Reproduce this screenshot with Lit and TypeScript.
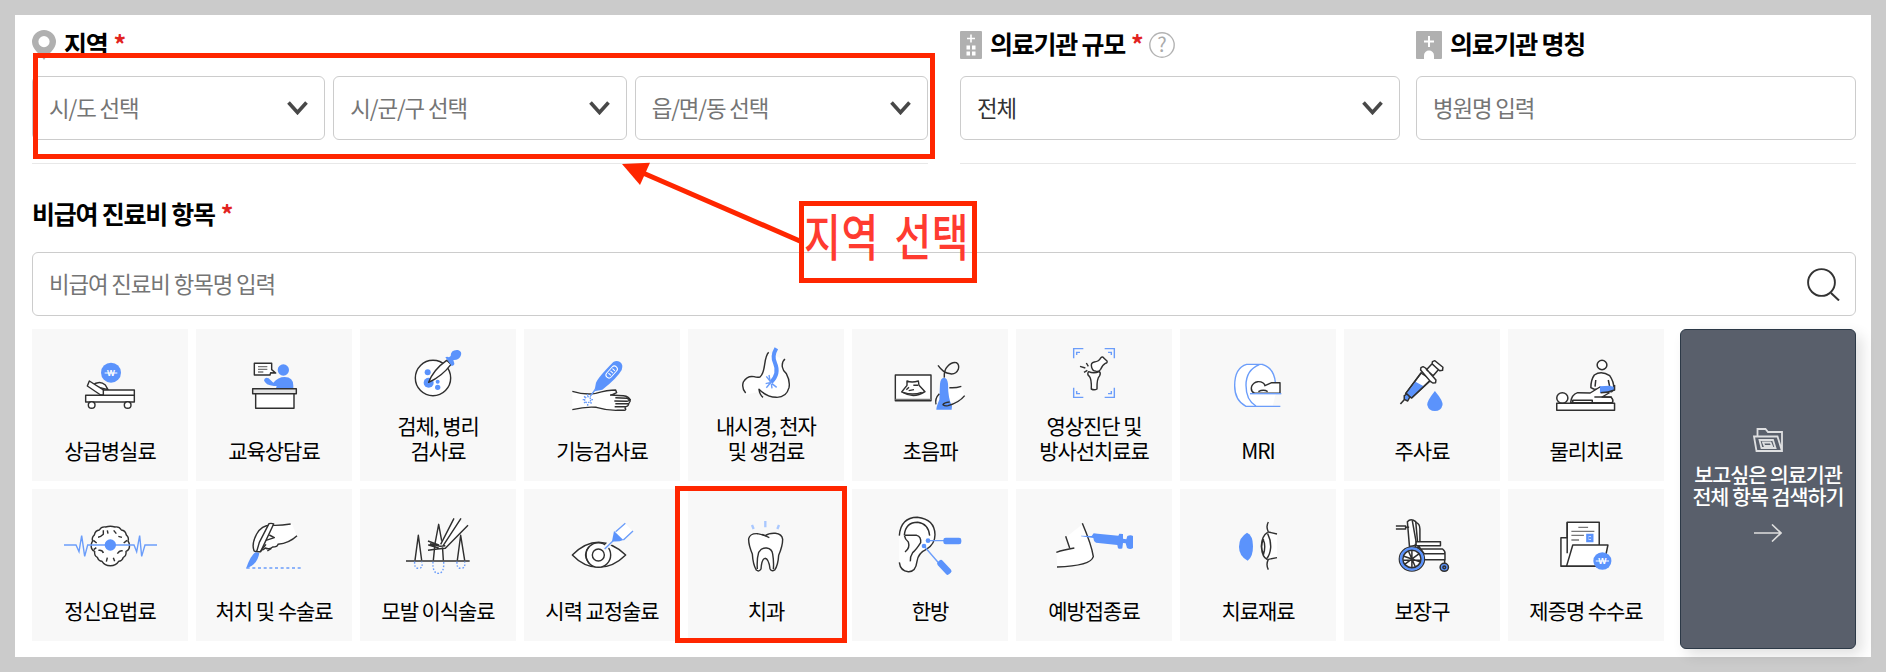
import { LitElement, html, svg, css, SVGTemplateResult } from "lit";
import { customElement, property } from "lit/decorators.js";

interface Category {
  lines: string[];
  box: string;
  art: SVGTemplateResult;
}

const won = (x: number, y: number) => svg`<text class="won" x=${x} y=${y + 9} font-size="25">W</text>
  <path d="M${x - 19} ${y}H${x + 19}" stroke="#fff" stroke-width="3"/>`;

const categories: Category[] = [
  {
    lines: ["상급병실료"],
    box: "36 12 468 240",
    art: svg`<circle class="b" cx="273" cy="143" r="30"/>${won(273, 144)}
      <path class="s" d="M216 182q22-18 40-2l8 14z"/>
      <path class="s" d="M208 168l54 34v8h-20l-40-27z"/>
      <path class="s" d="M250 210V195H343V212M197 211H343V231H197z"/>
      <circle class="s" cx="215" cy="240" r="10"/><circle class="s" cx="323" cy="240" r="10"/>`,
  },
  {
    lines: ["교육상담료"],
    box: "528 12 468 240",
    art: svg`<circle class="b" cx="790" cy="135" r="17"/>
      <path class="b" d="M732 166q2-11 14-6l14 13q14-17 34-17 26 0 26 26v8h-52l2-7h-8q-26-2-30-17z"/>
      <path class="s" d="M703 115H755V134L767 144 752 143 750 150H703z"/>
      <path class="l" d="M714 125H742M714 133H742M714 141H730"/>
      <path class="s" d="M707 204H822V250H707z"/><path class="s" style="fill:#e4e4e4" d="M698 191H829V206H698z"/>`,
  },
  {
    lines: ["검체, 병리", "검사료"],
    box: "30 12 468 240",
    art: svg`<circle class="s" cx="249" cy="159" r="53"/>
      <circle class="b" cx="233" cy="142" r="9"/><circle class="b" cx="236" cy="173" r="15"/>
      <circle class="b" cx="263" cy="170" r="6"/><circle class="b" cx="263" cy="187" r="8"/>
      <path class="s" d="M236 172Q250 134 290 106L303 118Q276 154 236 172z"/>
      <path class="b" d="M286 97q5-4 11 0l5-4q0-20 22-18 14 5 8 18-6 13-22 12l2 7q4 9-7 11z"/>`,
  },
  {
    lines: ["기능검사료"],
    box: "522 12 468 240",
    art: svg`<path class="w" d="M667 198l60 8 60-10 54 24-8 35-90-6-76 5z"/>
      <path class="n" d="M667 199q40 12 70 6 36-10 60-10l3 8-18 8M667 254q40-10 72-7 34 10 64 9h20q8-2 1-8M780 210l40 2q18 2 21 14M796 218l35 2q14 6 0 9l-38-1M796 236h40q7-7 5-13M794 245h33q8-1 9-8"/>
      <path class="b" d="M733 199l5-26q8-18 52-62 10-6 20 0 11 8 5 24-14 25-58 59z"/>
      <path class="bs" d="M737 192L720 215"/>
      <g transform="rotate(-48 785 141)"><rect x="764" y="132" width="42" height="18" rx="9" fill="none" stroke="#fff" stroke-width="3"/><path d="M776 136v10M785 136v10M794 136v10" stroke="#fff" stroke-width="3"/></g>
      <circle class="bs" cx="713" cy="224" r="9" stroke-dasharray="5 3"/>
      <path class="bs" d="M713 207v5M713 237v5M698 224h5M724 224h5M702 214l4 3M721 232l4 3M702 234l4-3"/>`,
  },
  {
    lines: ["내시경, 천자", "및 생검료"],
    box: "24 12 468 240",
    art: svg`<path class="w" d="M264 82q-14 60-22 75-14 4-28-2-30 6-26 42l8 12 40-8q30 18 66 14 28-16 26-50-6-22-20-36v-26z"/>
      <path class="n" d="M266 82q-8 8-12 36-4 30-14 38-8 2-18-1-20-4-32 16-6 18 7 33M315 102q-10 8-8 24 2 12 12 20 12 22 8 42-8 30-38 29-28 0-52-24 2 16 12 24"/>
      <path class="n" style="stroke:#5b93fc;stroke-width:12" d="M289 70q-14 24-4 44 14 32-12 58"/>
      <path class="bs" d="M273 172l-14-18M273 172l-16 4M273 172l-14 16M274 176l2 14M276 176l14 11M271 172l-4-22"/>`,
  },
  {
    lines: ["초음파"],
    box: "516 12 468 240",
    art: svg`<path class="s" d="M646 150H753V227H646z"/><path class="l" d="M646 223H753"/>
      <path class="n" d="M681 168q14 6 34 0l2 13 18 19q-34 22-70 1l16-20z"/><path class="n" d="M669 202q30 10 56 0M687 187l-8 7M700 181h14M686 197l16-3"/>
      <path class="w" d="M768 240q-8-20 2-32l20-20 54-2 10 26-50 26z"/>
      <path class="b" d="M780 176q2-18 12-18t12 18q0 46 12 66l-1 12h-46q0-10 9-30z"/>
      <path class="n" d="M768 238q-4-18 10-32M808 188q18 2 36-4M854 212q-18 22-50 30-10 2-15-3 2-6 20-8M793 158q-2-22 10-34 12-14 26-11 10 6 6 20-6 14-20 14-16-2-24-8-10-8-17-18"/>`,
  },
  {
    lines: ["영상진단 및", "방사선치료료"],
    box: "18 12 468 240",
    art: svg`<path class="bs" d="M191 100V71H220M284 71H313V100M313 188V217H284M220 217H191V188"/>
      <path class="bs" d="M200 90V82H210M294 82H304V90M304 198V206H294M210 206H200V198"/>
      <path class="s" d="M236 140q14 7 32 0 5 4 1 12-9 8-8 40-8 5-17 0 1-30-6-38-8-6-2-14zM245 127q-4-14 8-16 14-2 19-12 6-6 10 1l9 8q2 6-5 7-8 4-14 18-8 10-16 5-8 0-11-11z"/>
      <path class="n" d="M210 124l16 5M229 114l6 10M222 142l10-6"/>`,
  },
  {
    lines: ["MRI"],
    box: "510 12 468 240",
    art: svg`<path class="w" d="M708 118h50q36 14 40 56v30l-10 38h-80q-34-20-34-60t34-64z"/>
      <path class="bs" d="M760 118H710q-36 10-36 64 0 44 34 62H811M748 119q-40 16-40 62 0 46 30 62M756 118q36 10 40 54"/>
      <path class="s" d="M733 204q-12-5-8-20 5-12 18-14 18-1 22 12l20-9h25v32z"/><path class="n" d="M745 200q16-8 28 0"/>
      <path class="bs" d="M720 206H814"/>`,
  },
  {
    lines: ["주사료"],
    box: "11 12 448 240",
    art: svg`<path class="s" d="M188 206L232 144 262 164 205 219z"/>
      <path class="b" d="M190 206L216 170 240 184 205 217z"/>
      <path class="n" d="M188 206L234 142M205 219L260 164"/>
      <path class="n" d="M188 206l17 13"/>
      <path class="s" d="M232 128l6-3 7 4 30 36-1 8-8 1-7-5-28-34zM248 134l16-18 18 18-15 18zM265 110l7-3 23 20-1 9-8 1-22-20z"/>
      <path class="s" style="fill:#5b93fc" d="M184 212l8-5 8 9-6 12-10-5z"/><path class="n" d="M184 224l-11 13"/>
      <path class="b" d="M272 198q24 30 22 42-4 18-22 18t-22-18q-1-12 22-42z"/>`,
  },
  {
    lines: ["물리치료"],
    box: "482 12 448 240",
    art: svg`<path class="s" d="M728 192l-8-4q0-24 10-38 20-14 44 2 12 18 12 38l-6 10z"/><circle class="s" cx="752" cy="120" r="14"/>
      <path class="n" d="M734 165l-2 20M770 165l4 20"/>
      <path class="s" d="M662 233q2-24 20-30l36 1 28-18 26 18-20 12 26 1q8 8 4 16z"/>
      <path class="b" d="M746 184l28-2 14 4v10q-16 6-42 8z"/><path class="n" d="M788 180v15q-18 8-40 8M730 216h50M668 233v-7h56v7"/>
      <circle class="s" cx="638" cy="219" r="16"/><path class="s" d="M622 235H788V256H622z"/>`,
  },
  {
    lines: ["정신요법료"],
    box: "36 12 468 240",
    art: svg`<path class="s" d="M257 126Q271 122 285 126 298 124 304 135 316 136 319 150 328 158 324 168 331 178 327 191 324 197 318 199 320 212 310 217 306 229 296 229 288 242 271 242 254 242 246 229 236 229 232 217 222 212 224 199 218 197 215 191 211 178 218 168 214 158 223 150 226 136 238 135 244 124 257 126z"/>
      <path class="n" d="M250 136v12q-8 8-16 9M281 136l8 10M306 157l-11-3M262 136l2 10M235 196q12-2 15 8M292 206q8-12 16-8M259 230l3-12M280 218l4 11M220 166l10 8M321 166l-10 8M221 194l8-6"/>
      <path class="bs" d="M132 180H168L177 200 185 152 194 214 203 180H342L350 200 359 152 365 214 375 180H411"/>
      <circle class="b" cx="271" cy="180" r="17"/>`,
  },
  {
    lines: ["처치 및 수술료"],
    box: "528 12 468 240",
    art: svg`<path class="w" d="M710 140l40-22 66-2 14 36-30 16-36 24-50 10-12-30z"/>
      <path class="n" d="M812 117q-30 5-56 4-30-2-46 26-16 30-8 50 6 6 14-2 14 2 20-6 12 6 22-3 14 0 16-8 34-4 57-26"/>
      <path class="s" d="M747 116q8-2 14 1L722 200h-12l8-28z"/><path class="n" d="M738 166l25-8-15-8M722 198l16-20M742 198l12-8"/>
      <path class="b" d="M706 202l12 2q-6 36-40 47 14-40 28-49z"/><path class="bs" stroke-dasharray="9 8" d="M680 249H846"/>`,
  },
  {
    lines: ["모발 이식술료"],
    box: "30 12 468 240",
    art: svg`<path class="s" d="M195 226l10-75 10 75M322 226l10-75 12 75M250 226l5-50 11-58 11 60 3 48"/>
      <path class="w" d="M312 100l42 22-68 68-20-6z"/>
      <path class="n" d="M312 100L272 178M333 100L278 184M354 121L286 190 262 192 234 196M234 168l32 12h-30l30 9M240 176l30 8 16-2"/>
      <path class="n" d="M168 228H359"/>
      <path class="bs" stroke-dasharray="5 5" d="M194 230q-2 20 12 20t9-20M249 230q-2 35 16 35t16-35M321 230q-2 20 12 20t11-20"/>`,
  },
  {
    lines: ["시력 교정술료"],
    box: "522 12 468 240",
    art: svg`<path class="s" d="M667 210Q705 172 746 172 790 174 827 210 790 247 746 247 702 247 667 210z"/>
      <circle class="s" cx="745" cy="210" r="37"/><circle class="s" cx="745" cy="210" r="18"/>
      <path class="n" d="M717 185q-20 22 0 50"/>
      <path d="M762 194L790 162" stroke="#f8f8f8" stroke-width="14"/>
      <path class="w" d="M796 140l28-26 24 24-30 27z"/><path class="bs" d="M764 192L795 162M797 140l29-25M820 165l29-27"/>
      <path class="b" d="M792 138l28 27q-14 6-34 4z"/>`,
  },
  {
    lines: ["치과"],
    box: "54 12 468 240",
    art: svg`<path class="s" d="M262 146q12 2 24 6 10-8 30-7 20 2 22 18 0 20-12 48-2 30-12 44-10 6-14-4-4-30-15-31-10 2-12 32-6 10-14 3-10-16-12-48-12-28-11-46 4-16 26-15z"/>
      <path class="n" d="M262 252q-2-30 4-50 10-15 24-13 16 2 18 18 4 24 2 46M276 148l22 10"/>
      <path d="M246 120l5 12M327 120l-5 12M286 108v19" fill="none" stroke="#a9c8ff" stroke-width="7"/>`,
  },
  {
    lines: ["한방"],
    box: "546 12 468 240",
    art: svg`<path class="s" d="M688 148Q694 98 742 97q50 4 54 52 0 24-22 42-14 10-30 18-4 28-10 40-18 18-38 6-8-8-8-22z" style="stroke:none"/>
      <path class="n" d="M688 152q4-54 54-55 52 6 53 52 0 28-26 44-24 10-28 36-4 32-26 31-24-2-27-28M703 150q4-38 40-38 32 4 36 40M704 151h36q14 4 12 22-14 22-24 30-8 12-7 26M703 151q2 12 12 20 6 18-10 30"/>
      <path class="bs" d="M774 167H822M762 183L806 234"/><circle class="b" cx="774" cy="167" r="7"/><circle class="b" cx="762" cy="183" r="7"/>
      <rect class="b" x="820" y="158" width="54" height="20" rx="7"/><rect class="b" x="798" y="237" width="50" height="20" rx="7" transform="rotate(47 823 247)"/>`,
  },
  {
    lines: ["예방접종료"],
    box: "33 12 468 240",
    art: svg`<path class="w" d="M154 202l38-14-8-32 48-38q24 60 33 96-6 30-108 32z"/>
      <path class="n" d="M232 115q28 66 33 100-8 28-109 31M154 202q22-8 54-13M182 154l12 35"/>
      <path class="b" d="M228 152l32 1 6-8 12 1 62 6 3-6 11 1v14l10 2 3-10q10-5 17 0v36q-8 6-18 0l-4-14-8-1-2 16q-6 3-13 0l-2-10-64-7q-8-4-8-14l-37-5z"/>`,
  },
  {
    lines: ["치료재료"],
    box: "525 12 468 240",
    art: svg`<path class="b" d="M726 143q18 8 18 41t-16 43q-26-14-26-42t24-42z"/>
      <path class="w" d="M788 142l28 8v68l-30 6-14-20v-44z"/>
      <path class="n" d="M790 111q-8 14 0 30l26 6M816 218l-26 5q-8 16 0 31M788 142q-18 10-19 42 2 32 18 40M788 146q10 20 9 42-2 22-12 33M774 162q10 20 1 48M776 162q-12 24 0 46"/>`,
  },
  {
    lines: ["보장구"],
    box: "11 492 448 240",
    art: svg`<path class="s" d="M193 590q10-12 24 0l6 70-24 4z"/><path class="n" d="M207 586l12 70M217 592q12 4 12 20v40M160 603h28v9h-28M188 607h10"/>
      <path class="s" d="M218 650h70v12h-70zM226 664l-8 8h76q8 6 7 14h-60zM240 686h61v18h-60"/><path class="n" d="M300 704v14M216 656v14"/>
      <circle class="s" cx="206" cy="702" r="36"/><circle cx="206" cy="702" r="31" fill="none" stroke="#5b93fc" stroke-width="8"/><circle class="n" cx="206" cy="702" r="26"/>
      <path class="n" d="M206 676v52M181 693l50 18M184 719l44-34M196 678l20 48M181 706h50"/>
      <circle class="s" style="fill:#5b93fc" cx="299" cy="727" r="12"/><circle class="n" cx="299" cy="727" r="4"/>`,
  },
  {
    lines: ["제증명 수수료"],
    box: "482 492 448 240",
    art: svg`<path class="s" d="M634 724V638H652V592H744V724z"/><path class="n" d="M652 592V685"/>
      <path class="l" d="M684 607H712M664 619H730M664 631H700M664 645H686"/>
      <path d="M710 630h14v18h-14z" fill="#fff" stroke="#5b93fc" stroke-width="7"/><circle class="b" cx="717" cy="639" r="4"/>
      <path class="s" d="M668 660H769L756 724H650z"/><path class="n" d="M634 724H740"/>
      <circle class="b" cx="753" cy="708" r="26"/>${won(753, 708)}`,
  },
];

@customElement("fee-tile")
class FeeTile extends LitElement {
  @property({ attribute: false }) item!: Category;
  static styles = css`
    :host { display: flex; flex-direction: column; justify-content: space-between; height: 152px; box-sizing: border-box; padding-bottom: 18px; background: #f8f8f8; }
    .art { display: block; width: 156px; height: 80px; overflow: visible; }
    .label { font-size: 21px; line-height: 25px; letter-spacing: -0.05em; text-align: center; color: #000; white-space: nowrap; }
    .line { display: block; }
    .s, .n { stroke: #303030; stroke-width: 4.3; stroke-linejoin: round; }
    .s { fill: #fff; }
    .n, .l, .bs { fill: none; }
    .l { stroke: #777; stroke-width: 4; }
    .w { fill: #fff; }
    .b { fill: #5b93fc; }
    .bs { stroke: #6b9dfa; stroke-width: 4.2; }
    .won { fill: #fff; text-anchor: middle; font-family: "Liberation Sans", sans-serif; font-weight: 700; letter-spacing: 0; }
  `;
  render() {
    return html`<svg class="art" viewBox=${this.item.box} preserveAspectRatio="none">${this.item.art}</svg>
      <div class="label">${this.item.lines.map((t) => html`<span class="line">${t}</span>`)}</div>`;
  }
}

@customElement("select-box")
class SelectBox extends LitElement {
  @property() text = "";
  @property({ type: Boolean }) chosen = false;
  @property({ type: Boolean }) plain = false;
  static styles = css`
    :host { flex: 1 1 0; min-width: 0; }
    .box { display: flex; align-items: center; justify-content: space-between; height: 64px; box-sizing: border-box; padding: 0 16px 3px 16px; border: 1px solid #ccc; border-radius: 6px; background: #fff; font-size: 22.4px; line-height: 32px; letter-spacing: -0.05em; color: #757575; }
    .chosen { color: #333; }
    .chevron { display: block; width: 21px; height: 14px; margin-top: 3px; }
  `;
  render() {
    return html`<div class="box ${this.chosen ? "chosen" : ""}">
      <span>${this.text}</span>
      ${this.plain ? "" : html`<svg class="chevron" viewBox="0 0 21 14"><path d="M1.5 1.5L10.5 11.5L19.5 1.5" fill="none" stroke="#484848" stroke-width="3.6"/></svg>`}
    </div>`;
  }
}

@customElement("app-root")
class AppRoot extends LitElement {
  static styles = css`
    :host { display: block; position: relative; width: 1886px; height: 672px; box-sizing: border-box; padding: 15px; background: #cbcbcb; overflow: hidden; font-family: "Noto Sans CJK KR", sans-serif; }
    .panel { height: 642px; box-sizing: border-box; padding: 15px 15px 0 17px; background: #fff; }
    .filters { display: grid; grid-template-columns: 1fr 1fr; gap: 32px; }
    .group { display: flex; gap: 16px; height: 133px; border-bottom: 1px solid #e8e8e8; }
    .field { flex: 1 1 0; min-width: 0; }
    .row { display: flex; gap: 8px; }
    .title { display: flex; align-items: center; height: 29px; margin-bottom: 17px; font-size: 25px; line-height: 27px; font-weight: 700; letter-spacing: -0.05em; color: #000; white-space: nowrap; }
    .title span { display: block; padding-bottom: 2px; }
    .title svg { flex: none; margin-right: 8px; }
    .title .star { margin-left: 6px; color: #e2231f; }
    .title .help { margin: 0 0 0 7px; }
    .item-title { margin: 36px 0 23px; }
    .search { display: flex; align-items: center; justify-content: space-between; height: 64px; box-sizing: border-box; padding: 0 15px 0 16px; border: 1px solid #ccc; border-radius: 6px; font-size: 22.4px; letter-spacing: -0.05em; color: #757575; }
    .search span { line-height: 32px; padding-bottom: 3px; }
    .results { display: flex; align-items: flex-start; gap: 16px; margin-top: 13px; }
    .tiles { display: grid; grid-template-columns: repeat(10, 156px); grid-auto-rows: 152px; gap: 8px; }
    .all { display: flex; flex-direction: column; align-items: center; width: 176px; height: 320px; box-sizing: border-box; padding-top: 98px; border: 1px solid #2c3947; border-radius: 6px; background: #595f6b; box-shadow: 6px 6px 14px rgba(0, 0, 0, 0.12); color: #fff; font-size: 20.7px; line-height: 21.5px; font-weight: 500; letter-spacing: -0.05em; text-align: center; white-space: nowrap; }
    .all-text { margin: 12px 0 17px; }
    .mark { position: absolute; box-sizing: border-box; border: 5px solid #ff2600; }
    .mark-region { left: 33px; top: 53px; width: 902px; height: 106px; }
    .mark-dental { left: 675px; top: 486px; width: 172px; height: 157px; }
    .mark-note { left: 799px; top: 201px; width: 178px; height: 82px; }
    .note { position: absolute; left: 804px; top: 209px; font-size: 40px; line-height: 52px; font-weight: 500; letter-spacing: 0.6px; word-spacing: 6px; color: #ff3b30; white-space: nowrap; transform: scaleY(1.25); }
    .pointer { position: absolute; left: 615px; top: 155px; }
  `;
  render() {
    const star = html`<span class="star">*</span>`;
    return html`
      <main class="panel">
        <div class="filters">
          <section class="group">
            <div class="field">
              <div class="title">
                <svg width="24" height="30" viewBox="0 0 24 30"><path fill="#b0b0b0" fill-rule="evenodd" d="M12 0a12 12 0 0 1 12 12c0 7-8 12-12 18C8 24 0 19 0 12A12 12 0 0 1 12 0zm0 6a5.6 5.6 0 1 0 0 11.2A5.6 5.6 0 0 0 12 6z"/></svg>
                <span>지역</span>${star}
              </div>
              <div class="row">
                <select-box text="시/도 선택"></select-box>
                <select-box text="시/군/구 선택"></select-box>
                <select-box text="읍/면/동 선택"></select-box>
              </div>
            </div>
          </section>
          <section class="group">
            <div class="field">
              <div class="title">
                <svg width="22" height="28" viewBox="0 0 22 28"><rect width="22" height="28" rx="1" fill="#b0b0b0"/><path d="M11 3.5v8M7 7.5h8" stroke="#fff" stroke-width="1.6"/><path d="M6.5 14.5h3.5v4H6.5zM12 14.5h3.5v4H12zM6.5 20.5h3.5v4H6.5zM12 20.5h3.5v4H12z" fill="#fff"/></svg>
                <span>의료기관 규모</span>${star}
                <svg class="help" width="26" height="26" viewBox="0 0 26 26"><circle cx="13" cy="13" r="12.2" fill="#fff" stroke="#b3b3b3" stroke-width="1.4"/><text x="13" y="20" text-anchor="middle" font-size="20" font-weight="400" letter-spacing="0" fill="#aaa">?</text></svg>
              </div>
              <select-box text="전체" chosen></select-box>
            </div>
            <div class="field">
              <div class="title">
                <svg width="26" height="28" viewBox="0 0 26 28"><rect width="26" height="28" rx="1" fill="#b0b0b0"/><path d="M13 5v11M8 10.5h10" stroke="#fff" stroke-width="2"/><path d="M8 28v-3.5a5 5 0 0 1 10 0V28z" fill="#fff"/></svg>
                <span>의료기관 명칭</span>
              </div>
              <select-box text="병원명 입력" plain></select-box>
            </div>
          </section>
        </div>
        <div class="title item-title"><span>비급여 진료비 항목</span>${star}</div>
        <div class="search">
          <span>비급여 진료비 항목명 입력</span>
          <svg width="33" height="33" viewBox="0 0 33 33"><path d="M24 25L32 32.5" stroke="#333" stroke-width="2"/><circle cx="14.5" cy="14.5" r="13.4" fill="none" stroke="#333" stroke-width="1.9"/></svg>
        </div>
        <div class="results">
          <div class="tiles">${categories.map((c) => html`<fee-tile .item=${c}></fee-tile>`)}</div>
          <div class="all">
            <svg width="30" height="24" viewBox="0 0 30 24" fill="none" stroke="#dedfe1" stroke-width="1.8"><path d="M4.5 8.5V1h8l2.5 3h14v19H3.5L1 8.5h23.5L29 23"/><path d="M6.5 12h13.5l2.5 8H8.5z"/><path d="M10 14.5h7.5l1.5 3.5h-7.5z"/></svg>
            <div class="all-text">보고싶은 의료기관<br />전체 항목 검색하기</div>
            <svg width="28" height="18" viewBox="0 0 28 18" fill="none" stroke="#dedede" stroke-width="1.6"><path d="M0 9H27M18 .5L27 9L18 17.5"/></svg>
          </div>
        </div>
      </main>
      <div class="mark mark-region"></div>
      <div class="mark mark-dental"></div>
      <div class="mark mark-note"></div>
      <svg class="pointer" width="190" height="95" viewBox="615 155 190 95"><path d="M643 173L801 241.5" stroke="#ff2600" stroke-width="5"/><path d="M622 164L650 162.7L640 185z" fill="#ff2600"/></svg>
      <div class="note">지역 선택</div>
    `;
  }
}
